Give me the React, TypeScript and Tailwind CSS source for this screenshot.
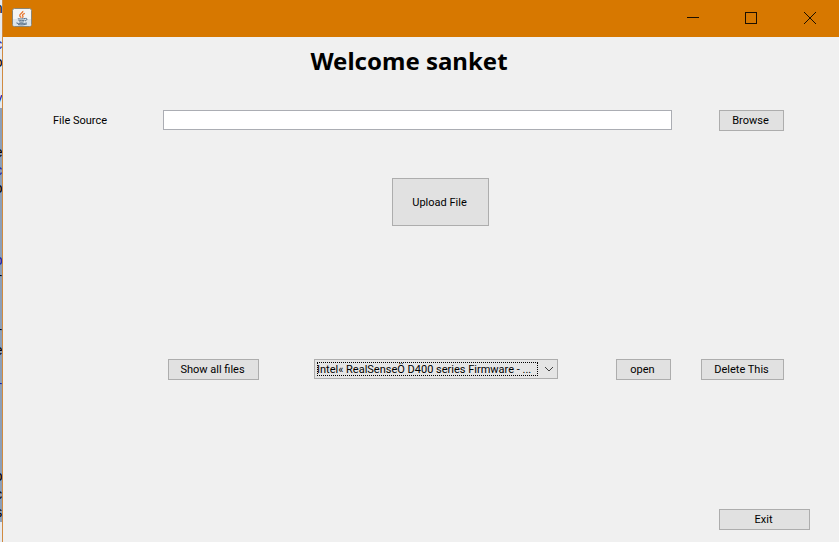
import type { ButtonHTMLAttributes } from "react";

type EditorLine = { text: string; blue?: boolean };

const editorLines: EditorLine[] = [
  { text: "n" }, { text: "" }, { text: "c", blue: true }, { text: "o" }, { text: "" },
  { text: "v", blue: true }, { text: "" }, { text: "" }, { text: "e" }, { text: "c", blue: true },
  { text: "o" }, { text: "" }, { text: "" }, { text: "" }, { text: "o", blue: true },
  { text: "r" }, { text: "" }, { text: "" }, { text: "r" }, { text: "e" },
  { text: "" }, { text: "r", blue: true }, { text: "" }, { text: "" }, { text: "" },
  { text: "" }, { text: "o" }, { text: "c" }, { text: "s" },
];

function EditorEdge() {
  return (
    <div aria-hidden="true" className="h-screen w-[2px] shrink-0 overflow-hidden bg-[#e6eaf0] font-['Liberation_Mono',monospace] text-sm">
      {editorLines.map((line, i) => (
        <div
          key={i}
          className={`flex h-[18px] items-center justify-end leading-[18px] ${i > 5 ? "bg-[#8c9fb8]" : ""} ${line.blue ? "text-[#1a1aa6]" : "text-black"}`}
        >
          <span className="-mr-px">{line.text}</span>
        </div>
      ))}
    </div>
  );
}

function PushButton({ className = "", ...props }: ButtonHTMLAttributes<HTMLButtonElement>) {
  return (
    <button
      type="button"
      className={`shrink-0 border border-[#adadad] bg-[#e1e1e1] pr-[2px] text-center whitespace-nowrap ${className}`}
      {...props}
    />
  );
}

function JavaIcon() {
  return (
    <svg width="20" height="20" viewBox="0 0 20 20" fill="none" aria-hidden="true">
      <rect x="0.5" y="0.5" width="19" height="18" rx="2" fill="#f3f4f5" stroke="#8b8574" />
      <path d="M1 11h18v5.500q0 1.500-1.500 1.500h-15Q1 18 1 16.500z" fill="#dbe4ec" />
      <path d="M10.800 3c.8 1.800-3.800 2.800-3 4.800.2.800 1.100 1.300 1.500 1.900M12.800 5.400c-2 .7-2.800 1.500-2 2.600.5.700.2 1.300-.5 1.800" stroke="#e8742c" strokeWidth="1.300" />
      <path d="M6 10.400c-1 .6 5 .8 7 0M6.400 12.200c1 .7 4.600.7 6.200 0M7.200 13.800c1.200.6 3.200.6 4.600 0M13.200 10.400c2.600-.5 2.200 1.900-.2 2.500M5.200 14.600c-3 1.200 7 1.700 9.400.2M6 16.600c3 .6 7 .3 9-.8" stroke="#4a6480" strokeWidth="0.900" />
    </svg>
  );
}

function TitleBar() {
  return (
    <header className="flex h-[37px] items-center justify-between bg-[#d77800] pb-[2px] pl-[9px] text-[#1c0f00]">
      <JavaIcon />
      <div className="flex h-full">
        <button type="button" aria-label="Minimize" className="flex w-[58px] items-center justify-center">
          <svg width="12" height="12" stroke="currentColor" fill="none"><path d="M0 5.500h12" /></svg>
        </button>
        <button type="button" aria-label="Maximize" className="flex w-[58px] items-center justify-center">
          <svg width="12" height="12" stroke="currentColor" fill="none"><rect x="0.500" y="0.500" width="11" height="11" /></svg>
        </button>
        <button type="button" aria-label="Close" className="flex w-[59px] items-center justify-center">
          <svg width="12" height="12" stroke="currentColor" fill="none"><path d="M0 0l12 12M12 0L0 12" /></svg>
        </button>
      </div>
    </header>
  );
}

export default function App() {
  return (
    <div className="flex min-h-screen bg-[#f0f0f0] font-[Roboto,sans-serif] text-[11px] leading-4 text-black">
      <EditorEdge />
      <div className="flex min-w-0 flex-1 flex-col border-l border-[#d08a40]">
        <TitleBar />
        <main className="flex flex-1 flex-col">
          <h1 className="pt-2 pr-6 text-center font-['Noto_Sans',sans-serif] text-2xl leading-8 font-bold">Welcome sanket</h1>

          <div className="mt-[33px] flex items-start pr-[55px] pl-[50px]">
            <label htmlFor="source" className="w-[110px] shrink-0 leading-[22px]">File Source</label>
            <input id="source" type="text" className="h-5 min-w-0 flex-1 border border-[#abadb3] bg-white px-1 outline-none" />
            <PushButton className="ml-[47px] h-[21px] w-[65px]">Browse</PushButton>
          </div>

          <div className="mt-[46px] flex justify-center pl-[39px]">
            <PushButton className="h-12 w-[97px] pt-[2px]">Upload File</PushButton>
          </div>

          <div className="mt-[133px] flex items-start pr-[55px] pl-[165px]">
            <PushButton className="h-[21px] w-[91px]">Show all files</PushButton>
            <div className="relative mr-[58px] ml-[55px] min-w-0 flex-1">
              <select
                aria-label="Uploaded files"
                className="block h-5 w-full appearance-none border border-[#adadad] bg-[#e5e5e5] pt-px pr-5 pl-[2px] outline-none"
              >
                <option>Intel« RealSenseÖ D400 series Firmware - ...</option>
              </select>
              <span className="pointer-events-none absolute inset-y-[3px] right-5 left-[3px] border border-dotted border-black" />
              <svg className="pointer-events-none absolute top-[7px] right-1" width="10" height="7" fill="none" stroke="#404040" aria-hidden="true">
                <path d="M1 1l4 4 4-4" />
              </svg>
            </div>
            <PushButton className="h-[21px] w-[55px]">open</PushButton>
            <PushButton className="ml-[30px] h-[21px] w-[83px]">Delete This</PushButton>
          </div>

          <div className="mt-auto flex justify-end pr-[29px] pb-3">
            <PushButton className="h-[21px] w-[91px]">Exit</PushButton>
          </div>
        </main>
      </div>
    </div>
  );
}
